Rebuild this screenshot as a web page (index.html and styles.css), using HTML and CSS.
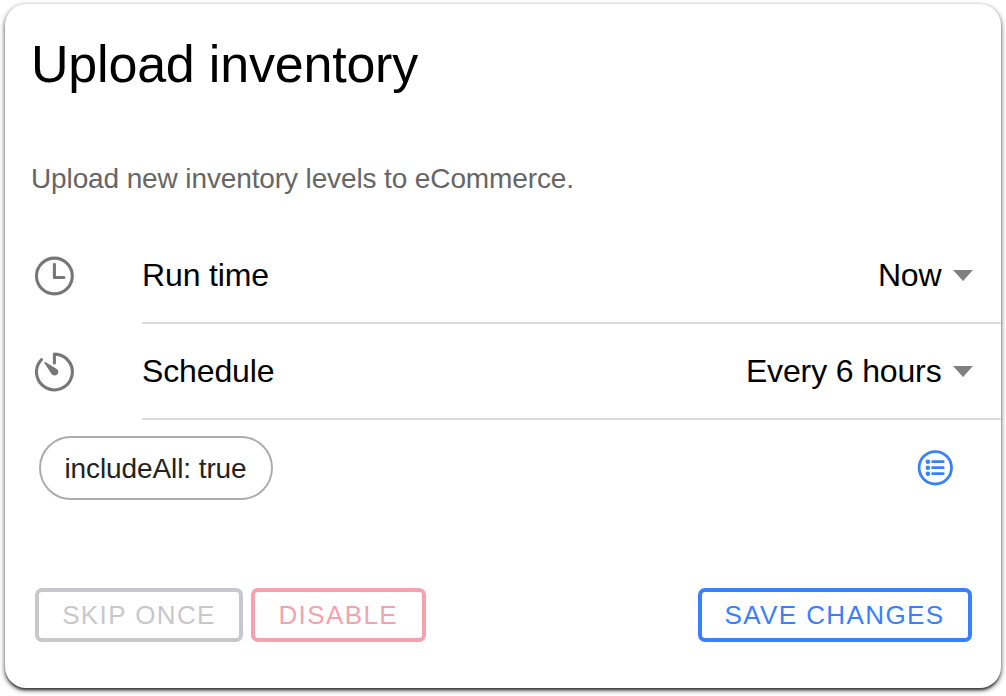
FILE: index.html
```html
<!DOCTYPE html>
<html lang="en">
<head>
<meta charset="utf-8">
<title>Upload inventory</title>
<link rel="stylesheet" href="styles.css">
</head>
<body>
<main class="card">
  <h1 class="title">Upload inventory</h1>
  <p class="description">Upload new inventory levels to eCommerce.</p>
  <section class="row">
    <svg class="row-icon" viewBox="0 0 40 40" fill="none" stroke="#777" stroke-width="3.1" stroke-linecap="round" stroke-linejoin="round"><circle cx="20.400" cy="20" r="17.900"/><path d="M20.400 8.300V21.500H29.900"/></svg>
    <div class="row-body"><span>Run time</span><span class="value">Now</span><i class="caret"></i></div>
  </section>
  <section class="row">
    <svg class="row-icon" viewBox="0 0 40 40" fill="none" stroke="#777" stroke-width="3.1" stroke-linecap="round" stroke-linejoin="round"><path d="M20.400 11V2.100A17.900 17.900 0 1 1 7.400 7.700"/><path d="M11.400 10.100L22.800 17.100C27 20.900 21.700 26 17.700 22.300L10.500 11.300C10 10.400 10.600 9.700 11.400 10.100Z" fill="#777" stroke="none"/></svg>
    <div class="row-body"><span>Schedule</span><span class="value">Every 6 hours</span><i class="caret"></i></div>
  </section>
  <div class="options">
    <span class="chip">includeAll: true</span>
    <svg class="list-icon" viewBox="0 0 36 36" fill="none" stroke="#3880ff" stroke-width="2.800" stroke-linecap="round"><circle cx="18.300" cy="17.800" r="16.200"/><path d="M15.600 11.700H26.200M15.600 17.700H26.200M15.600 23.700H26.200"/><g fill="#3880ff" stroke="none"><circle cx="10.900" cy="11.700" r="2.300"/><circle cx="10.900" cy="17.700" r="2.300"/><circle cx="10.900" cy="23.700" r="2.300"/></g></svg>
  </div>
  <footer class="actions">
    <button class="btn skip">SKIP ONCE</button>
    <button class="btn disable">DISABLE</button>
    <button class="btn save">SAVE CHANGES</button>
  </footer>
</main>
</body>
</html>
```
FILE: styles.css
```css
* { box-sizing: border-box; }
body {
  margin: 0;
  padding: 4px 5px 8px;
  height: 696px;
  background: #fff;
  color: #000;
  font-family: "Liberation Sans", Arial, sans-serif;
  overflow: hidden;
}
.card {
  height: 684px;
  border-radius: 21px;
  box-shadow: 0 3px 2px -1px rgba(0, 0, 0, .4), 0 2px 5px rgba(0, 0, 0, .75);
  overflow: hidden;
}
.title {
  margin: 0;
  padding: 30px 0 0 26px;
  font-size: 52px;
  line-height: 60px;
  font-weight: 400;
  letter-spacing: -.2px;
}
.description {
  margin: 0 0 4px;
  padding: 69px 0 0 26px;
  height: 130px;
  color: #666;
  font-size: 28px;
  line-height: 32px;
  letter-spacing: -.12px;
}
.row {
  display: flex;
  align-items: center;
  height: 96px;
  padding-left: 29px;
  font-size: 32px;
  letter-spacing: -.14px;
}
.row-icon { width: 40px; height: 40px; margin-right: 68px; flex: none; }
.row-body {
  display: flex;
  flex: 1;
  align-items: center;
  height: 96px;
  padding-right: 28.5px;
  border-bottom: 2px solid #dbdbdb;
}
.value { margin-left: auto; }
.caret {
  margin: 1px 0 0 11px;
  border: 10px solid transparent;
  border-top: 11px solid #808080;
  border-bottom: 0;
}
.options {
  display: flex;
  align-items: center;
  justify-content: space-between;
  height: 64px;
  margin: 16px 48px 0 33.5px;
}
.chip {
  height: 64px;
  padding: 1px 24px 0;
  border: 2px solid #adadad;
  border-radius: 32px;
  color: #222;
  font-size: 28px;
  line-height: 60px;
  letter-spacing: -.1px;
}
.list-icon { width: 36px; height: 36px; }
.actions {
  display: flex;
  gap: 8px;
  margin: 88px 29.5px 0 30px;
}
.btn {
  height: 54px;
  padding: 0;
  border: 4px solid currentColor;
  border-radius: 7px;
  background: none;
  font: 26px/46px "Liberation Sans", Arial, sans-serif;
  letter-spacing: 1.4px;
}
.skip { width: 208px; color: #c8c7cc; }
.disable { width: 174.5px; color: #f6a2ae; }
.save { width: 274px; margin-left: auto; color: #3880ff; }
```
